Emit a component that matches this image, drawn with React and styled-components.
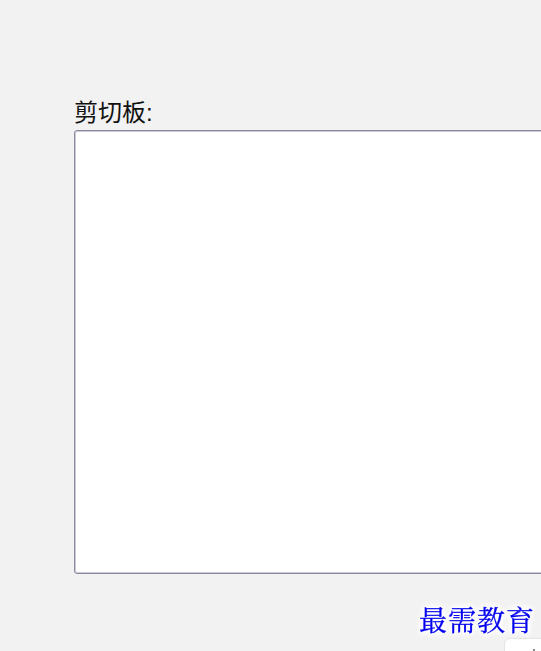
import React from "react";
import styled, { createGlobalStyle } from "styled-components";

const GlobalStyle = createGlobalStyle`
  html, body {
    margin: 0;
    padding: 0;
    height: 100%;
    overflow: hidden;
    background: #f2f2f2;
  }
`;

const Page = styled.div`
  position: relative;
  width: 541px;
  height: 651px;
  overflow: hidden;
  padding: 96px 0 0 74px;
  box-sizing: border-box;
  background: #f2f2f2;
`;

const Label = styled.label`
  display: block;
  font-family: "Liberation Sans", "Noto Sans CJK SC", sans-serif;
  font-size: 24px;
  line-height: 34px;
  color: #111;
`;

const ClipboardArea = styled.textarea`
  display: block;
  width: 600px;
  height: 444px;
  margin: 0;
  padding: 0;
  box-sizing: border-box;
  background: #fff;
  border: 1px solid #8c8c9e;
  border-radius: 3px;
  box-shadow: inset 0 0 0 1px #c9c9d2;
  outline: none;
  resize: none;
`;

const Watermark = styled.div`
  position: absolute;
  left: 419px;
  top: 602px;
  font-family: "Noto Serif CJK SC", "Noto Sans CJK SC", serif;
  font-size: 28px;
  line-height: 34px;
  letter-spacing: 1px;
  white-space: nowrap;
  color: #0000ee;
  -webkit-text-stroke: 0.3px #0000ee;
  filter: drop-shadow(0 0 2px #fff) drop-shadow(0 0 2px #fff) drop-shadow(0 0 2px #fff);
`;

const Corner = styled.div`
  position: absolute;
  left: 504px;
  top: 638px;
  width: 60px;
  height: 40px;
  box-sizing: border-box;
  background: #fff;
  border: 1px solid #e4e4e4;
  border-radius: 6px;
`;

const CornerMark = styled.span`
  position: absolute;
  left: 28px;
  top: 10px;
  width: 2px;
  height: 2px;
  background: #8a8a8a;
`;

export default function App() {
  return (
    <Page>
      <GlobalStyle />
      <Label htmlFor="clipboard">剪切板:</Label>
      <ClipboardArea id="clipboard" />
      <Watermark>最需教育</Watermark>
      <Corner>
        <CornerMark />
      </Corner>
    </Page>
  );
}
